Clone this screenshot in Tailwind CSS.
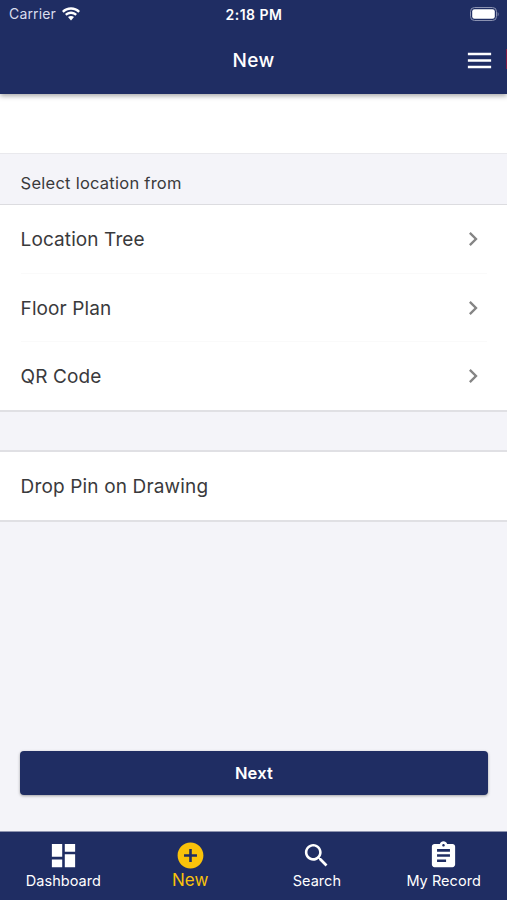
<!DOCTYPE html>
<html lang="en">
<head>
    <meta charset="UTF-8">
    <meta name="viewport" content="width=device-width, initial-scale=1.0">
    <title>New</title>
    <script src="https://cdn.jsdelivr.net/npm/@tailwindcss/browser@4"></script>
</head>
<body class="h-screen flex flex-col overflow-hidden bg-[#f4f4f9] text-[#3a3a3c] font-['Inter','Liberation_Sans',sans-serif]">

    <!-- Header -->
    <header class="relative z-10 h-[94px] shrink-0 bg-[#1f2d63] text-white shadow-[0_2px_5px_rgba(0,0,0,0.35)]">
        <div class="grid grid-cols-3 items-center h-[27px] pl-[9px] pr-[8px] text-[14px]">
            <div class="flex items-center gap-[6px] text-[#d9dded]">
                <span class="tracking-[0.15px]">Carrier</span>
                <svg class="w-[18px] h-[14px] fill-white" viewBox="0 0 18 14">
                    <path d="M9 0.3C5.5 0.3 2.4 1.6 0 3.9L1.7 5.7C3.6 3.8 6.2 2.7 9 2.7S14.4 3.8 16.3 5.7L18 3.9C15.6 1.6 12.5 0.3 9 0.3Z"/>
                    <path d="M9 4.6C6.700 4.600 4.600 5.500 3 7L4.700 8.800C5.800 7.700 7.300 7 9 7S12.200 7.700 13.300 8.800L15 7C13.400 5.500 11.300 4.600 9 4.600Z"/>
                    <path d="M9 8.900C7.800 8.900 6.800 9.300 6 10.100L9 13.400L12 10.100C11.200 9.300 10.200 8.900 9 8.900Z"/>
                </svg>
            </div>
            <span class="pt-px text-center font-semibold tracking-[0.5px]">2:18 PM</span>
            <svg class="justify-self-end w-[29px] h-[14px]" viewBox="0 0 29 14">
                <rect x="0.500" y="0.500" width="26" height="13" rx="4" fill="none" stroke="#8b92b1"/>
                <rect x="2.200" y="2.200" width="22.600" height="9.600" rx="2.300" fill="#fff"/>
                <path d="M27.700 5v4.400c1.200-.7 1.200-3.700 0-4.400z" fill="#8b92b1"/>
            </svg>
        </div>
        <div class="grid grid-cols-3 items-center h-[66px] pr-[12px]">
            <h1 class="col-start-2 pl-[12px] pt-[2px] text-center text-[19px] font-medium tracking-[0.4px]">New</h1>
            <svg class="justify-self-end w-[31px] h-[31px] fill-white" viewBox="0 0 24 24">
                <path d="M3 18h18v-2H3v2zm0-5h18v-2H3v2zm0-7v2h18V6H3z"/>
            </svg>
        </div>
        <div class="absolute right-0 top-[49px] w-px h-[20px] bg-[#7d1a45]"></div>
    </header>

    <!-- Content -->
    <main class="flex-1 flex flex-col">
        <div class="h-[59px] bg-white"></div>
        <h2 class="h-[52px] pl-[20.6px] pt-[8px] flex items-center border-y border-t-[#e9e9ed] border-b-[#dcdce0] text-[16.5px] tracking-[0.25px]">Select location from</h2>

        <ul class="h-[207px] bg-white pl-[20.6px] pr-[20px] border-b-2 border-[#e0e0e4] text-[19px] tracking-[0.1px]">
            <li class="h-[69px] flex items-center justify-between border-b border-[#fafafa]">
                <span class="pt-[2px]">Location Tree</span>
                <svg class="w-[28px] h-[28px] fill-[#858585]" viewBox="0 0 24 24"><path d="M10 6L8.590 7.410 13.170 12l-4.580 4.590L10 18l6-6z"/></svg>
            </li>
            <li class="h-[68px] flex items-center justify-between border-b border-[#fafafa]">
                <span class="pt-[3px]">Floor Plan</span>
                <svg class="w-[28px] h-[28px] fill-[#858585]" viewBox="0 0 24 24"><path d="M10 6L8.590 7.410 13.170 12l-4.580 4.590L10 18l6-6z"/></svg>
            </li>
            <li class="h-[68px] flex items-center justify-between">
                <span class="pt-[2px]">QR Code</span>
                <svg class="w-[28px] h-[28px] fill-[#858585]" viewBox="0 0 24 24"><path d="M10 6L8.590 7.410 13.170 12l-4.580 4.590L10 18l6-6z"/></svg>
            </li>
        </ul>

        <div class="mt-[38px] h-[72px] flex items-center px-[20.6px] pt-[2px] bg-white border-y-2 border-[#e0e0e4] text-[19px] tracking-[0.15px]">Drop Pin on Drawing</div>

        <button class="mt-auto mb-[36px] ml-[20px] mr-[19px] h-[44px] shrink-0 rounded-[4px] bg-[#1f2d63] text-white text-[16.5px] font-semibold tracking-[0.2px] shadow-[0_1px_3px_rgba(0,0,0,0.35)]">Next</button>
    </main>

    <!-- Bottom tabs -->
    <nav class="h-[69px] shrink-0 grid grid-cols-4 border-t border-[#8e94b0] bg-[#1f2d63] text-white text-[14.5px] leading-5 tracking-[0.05px]">
        <a class="flex flex-col items-center pt-[8px]">
            <svg class="w-[31px] h-[31px] fill-white" viewBox="0 0 24 24"><path d="M3 13h8V3H3v10zm0 8h8v-6H3v6zm10 0h8V11h-8v10zm0-18v6h8V3h-8z"/></svg>
            <span>Dashboard</span>
        </a>
        <a class="flex flex-col items-center pt-[8px] text-[#f9c20a]">
            <svg class="w-[31px] h-[31px] fill-[#f9c20a]" viewBox="0 0 24 24"><path d="M12 2C6.480 2 2 6.480 2 12s4.480 10 10 10 10-4.480 10-10S17.520 2 12 2zm5 11h-4v4h-2v-4H7v-2h4V7h2v4h4v2z"/></svg>
            <span class="-mt-px text-[17px]">New</span>
        </a>
        <a class="flex flex-col items-center pt-[8px]">
            <svg class="w-[31px] h-[31px] fill-white" viewBox="0 0 24 24"><path d="M15.500 14h-.79l-.28-.27C15.410 12.590 16 11.110 16 9.500 16 5.910 13.090 3 9.500 3S3 5.910 3 9.500 5.910 16 9.500 16c1.610 0 3.090-.59 4.230-1.570l.27.28v.79l5 4.990L20.490 19l-4.990-5zm-6 0C7.010 14 5 11.990 5 9.500S7.010 5 9.500 5 14 7.010 14 9.500 11.990 14 9.500 14z"/></svg>
            <span>Search</span>
        </a>
        <a class="flex flex-col items-center pt-[8px]">
            <svg class="w-[31px] h-[31px] fill-white" viewBox="0 0 24 24"><path d="M19 3h-4.180C14.400 1.840 13.300 1 12 1c-1.300 0-2.400.84-2.820 2H5c-1.100 0-2 .9-2 2v14c0 1.100.9 2 2 2h14c1.100 0 2-.9 2-2V5c0-1.100-.9-2-2-2zm-7 0c.55 0 1 .45 1 1s-.45 1-1 1-1-.45-1-1 .45-1 1-1zm2 14H7v-2h7v2zm3-4H7v-2h10v2zm0-4H7V7h10v2z"/></svg>
            <span>My Record</span>
        </a>
    </nav>

</body>
</html>
